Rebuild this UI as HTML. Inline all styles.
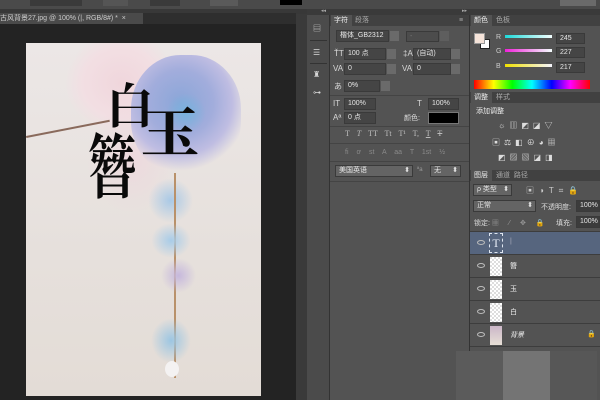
<!DOCTYPE html>
<html><head><meta charset="utf-8"><style>
*{margin:0;padding:0;box-sizing:border-box}
body{width:600px;height:400px;overflow:hidden;background:#232323;position:relative;font-family:"Liberation Sans","Noto Sans CJK SC",sans-serif;font-size:7px;color:#ddd}
.a{position:absolute}
.f{position:absolute;background:#454545;border:1px solid #3a3a3a;color:#e6e6e6;font-size:7px;line-height:10px;padding-left:3px}
.btn{position:absolute;background:#6a6a6a;width:9px;height:10px}
.ic{position:absolute;color:#d8d8d8;font-size:8px}
.row{position:absolute;left:470px;width:130px;height:23px;border-bottom:1px solid #3d3d3d;background:#535353}
.eye{position:absolute;left:7px;top:8px;width:8px;height:5px;border:1px solid #bbb;border-radius:50%}
.th{position:absolute;left:20px;top:2px;width:12px;height:19px;background:repeating-conic-gradient(#fff 0 25%,#ddd 0 50%) 0 0/4px 4px}
.nm{position:absolute;left:40px;top:6px;color:#eee;font-size:7px}
.cj{position:absolute;font-family:'Noto Serif CJK SC',serif;font-weight:700;color:#0a0a0a;line-height:1}
</style></head><body>
<div class="a" style="left:0;top:0;width:600px;height:9px;background:#4a4a4a"></div>
<div class="a" style="left:30px;top:0;width:52px;height:6px;background:#3a3a3a"></div>
<div class="a" style="left:103px;top:0;width:25px;height:6px;background:#555"></div>
<div class="a" style="left:150px;top:0;width:30px;height:6px;background:#3a3a3a"></div>
<div class="a" style="left:210px;top:0;width:28px;height:6px;background:#5a5a5a"></div>
<div class="a" style="left:280px;top:0;width:22px;height:5px;background:#000"></div>
<div class="a" style="left:560px;top:0;width:36px;height:6px;background:#6a6a6a"></div>
<div class="a" style="left:0;top:9px;width:600px;height:5px;background:#383838"></div>
<div class="a" style="left:0;top:13px;width:143px;height:11px;background:#4a4a4a;color:#ccc;font-size:7px;line-height:11px;white-space:nowrap">古风背景27.jpg @ 100% (|, RGB/8#) * &nbsp;×</div>
<div class="a" style="left:143px;top:13px;width:153px;height:11px;background:#2e2e2e"></div>
<div class="a" style="left:26px;top:43px;width:235px;height:353px;background:linear-gradient(180deg,#ece7e6,#e6e0dc 60%,#e3dcd6);overflow:hidden">
 <div class="a" style="left:40px;top:-10px;width:110px;height:100px;border-radius:50%;background:radial-gradient(#f0d6dc,#f2dfe3 50%,rgba(236,231,230,0) 72%)"></div>
 <div class="a" style="left:60px;top:60px;width:90px;height:110px;border-radius:50%;background:radial-gradient(rgba(238,214,220,.8),rgba(236,231,230,0) 70%)"></div>
 <div class="a" style="left:0;top:93px;width:85px;height:2px;background:#8a6a5c;transform:rotate(-11deg);transform-origin:0 0"></div>
 <div class="a" style="left:105px;top:12px;width:110px;height:120px;border-radius:45%;background:radial-gradient(circle at 45% 40%,#8aa6d8,#a2addc 35%,#bfbde2 55%,rgba(220,220,240,0) 72%)"></div>
 <div class="a" style="left:140px;top:50px;width:40px;height:40px;border-radius:50%;background:radial-gradient(#78b3de,rgba(200,220,240,0) 70%)"></div>
 <div class="a" style="left:122px;top:135px;width:45px;height:45px;border-radius:50%;background:radial-gradient(#a9c9e6,rgba(220,230,240,0) 70%)"></div>
 <div class="a" style="left:148px;top:130px;width:2px;height:205px;background:#b9916a"></div>
 <div class="a" style="left:125px;top:180px;width:40px;height:35px;border-radius:50%;background:radial-gradient(#a8cce8,rgba(220,230,240,0) 70%)"></div>
 <div class="a" style="left:135px;top:215px;width:35px;height:35px;border-radius:50%;background:radial-gradient(#c6b8dc,rgba(230,230,240,0) 70%)"></div>
 <div class="a" style="left:125px;top:275px;width:40px;height:45px;border-radius:50%;background:radial-gradient(#9cc6e2,rgba(220,230,240,0) 70%)"></div>
 <div class="a" style="left:139px;top:318px;width:14px;height:16px;border-radius:50%;background:#f4f2f2"></div>
 <div class="cj" style="left:80px;top:36px;font-size:48px">白</div>
 <div class="cj" style="left:117px;top:60px;font-size:54px;transform:scaleX(1.1)">玉</div>
 <div class="cj" style="left:62px;top:85px;font-size:48px;transform:scaleY(1.45);transform-origin:top">簪</div>
</div>
<div class="a" style="left:296px;top:14px;width:11px;height:386px;background:#3a3a3a"></div>
<div class="a" style="left:307px;top:14px;width:23px;height:386px;background:#4b4b4b;border-right:1px solid #333"></div>
<div class="a" style="left:307px;top:9px;width:293px;height:6px;background:#3a3a3a;color:#aaa;font-size:5px"><span class="a" style="left:14px;top:-1px">◂◂</span><span class="a" style="left:155px;top:-1px">▸▸</span></div>
<div class="ic" style="left:313px;top:23px">▤</div><div class="ic" style="left:313px;top:48px">☰</div><div class="ic" style="left:313px;top:70px">♜</div><div class="ic" style="left:313px;top:88px">⊶</div>
<div class="a" style="left:310px;top:40px;width:17px;height:1px;background:#333"></div>
<div class="a" style="left:310px;top:63px;width:17px;height:1px;background:#333"></div>
<div class="a" style="left:330px;top:15px;width:139px;height:385px;background:#535353"></div>
<div class="a" style="left:330px;top:15px;width:139px;height:11px;background:#414141"></div>
<div class="a" style="left:331px;top:15px;width:21px;height:11px;background:#535353;color:#eee;line-height:11px;padding-left:3px">字符</div>
<div class="a" style="left:355px;top:15px;color:#aaa;line-height:11px">段落</div>
<div class="a" style="left:459px;top:15px;color:#aaa;line-height:11px">≡</div>
<div class="f" style="left:336px;top:30px;width:53px;height:12px">楷体_GB2312</div><div class="btn" style="left:390px;top:31px"></div>
<div class="f" style="left:406px;top:31px;width:33px;height:11px;background:#4c4c4c;color:#777">-</div><div class="btn" style="left:440px;top:31px;background:#5e5e5e"></div>
<div class="ic" style="left:334px;top:49px">ŤT</div><div class="f" style="left:344px;top:48px;width:42px;height:12px">100 点</div><div class="btn" style="left:387px;top:49px"></div>
<div class="ic" style="left:403px;top:49px">‡A</div><div class="f" style="left:413px;top:48px;width:38px;height:12px">(自动)</div><div class="btn" style="left:451px;top:49px"></div>
<div class="ic" style="left:333px;top:64px">VA</div><div class="f" style="left:344px;top:63px;width:42px;height:12px">0</div><div class="btn" style="left:387px;top:64px"></div>
<div class="ic" style="left:402px;top:64px">VA</div><div class="f" style="left:413px;top:63px;width:38px;height:12px">0</div><div class="btn" style="left:451px;top:64px"></div>
<div class="ic" style="left:334px;top:81px">あ</div><div class="f" style="left:344px;top:80px;width:36px;height:12px">0%</div><div class="btn" style="left:381px;top:81px"></div>
<div class="a" style="left:330px;top:95px;width:139px;height:1px;background:#444"></div>
<div class="ic" style="left:333px;top:99px">IT</div><div class="f" style="left:344px;top:98px;width:32px;height:12px">100%</div>
<div class="ic" style="left:417px;top:99px">T</div><div class="f" style="left:428px;top:98px;width:31px;height:12px">100%</div>
<div class="ic" style="left:333px;top:113px">Aª</div><div class="f" style="left:344px;top:112px;width:32px;height:12px">0 点</div>
<div class="a" style="left:404px;top:113px;color:#ddd">颜色:</div><div class="a" style="left:428px;top:112px;width:31px;height:12px;background:#000;border:1px solid #777"></div>
<div class="a" style="left:330px;top:126px;width:139px;height:1px;background:#444"></div>
<div class="a" style="left:345px;top:129px;color:#bbb;font-family:'Liberation Serif',serif;font-size:8px;word-spacing:5px">T <i>T</i> TT Tt T¹ T, <u>T</u> <s>T</s></div>
<div class="a" style="left:330px;top:143px;width:139px;height:1px;background:#444"></div>
<div class="a" style="left:345px;top:149px;color:#8a8a8a;font-size:7px;word-spacing:6px">fi ơ st A aa T 1st ½</div>
<div class="a" style="left:330px;top:161px;width:139px;height:1px;background:#444"></div>
<div class="f" style="left:335px;top:165px;width:78px;height:12px;background:#646464">美国英语<span style="float:right;margin-right:2px">⬍</span></div>
<div class="a" style="left:417px;top:167px;color:#999;font-size:6px">ªa</div>
<div class="f" style="left:430px;top:165px;width:31px;height:12px;background:#646464">无<span style="float:right;margin-right:2px">⬍</span></div>
<div class="a" style="left:330px;top:181px;width:139px;height:1px;background:#444"></div>
<div class="a" style="left:469px;top:15px;width:1px;height:385px;background:#333"></div>
<div class="a" style="left:470px;top:15px;width:130px;height:385px;background:#535353"></div>
<div class="a" style="left:470px;top:15px;width:130px;height:11px;background:#414141"></div>
<div class="a" style="left:471px;top:15px;width:21px;height:11px;background:#535353;color:#eee;line-height:11px;padding-left:3px">颜色</div>
<div class="a" style="left:496px;top:15px;color:#aaa;line-height:11px">色板</div>
<div class="a" style="left:480px;top:39px;width:10px;height:10px;background:#fff;border:1px solid #222"></div>
<div class="a" style="left:474px;top:33px;width:11px;height:11px;background:#f5e3d9;border:1px solid #999"></div>
<div class="a" style="left:496px;top:34px;color:#ccc">R</div><div class="a" style="left:505px;top:35px;width:47px;height:3px;background:linear-gradient(90deg,#1cd9d9,#f5ffff)"></div><div class="f" style="left:556px;top:33px;width:29px;height:11px">245</div>
<div class="a" style="left:496px;top:48px;color:#ccc">G</div><div class="a" style="left:505px;top:49px;width:47px;height:3px;background:linear-gradient(90deg,#f020d9,#f5ffff)"></div><div class="f" style="left:556px;top:47px;width:29px;height:11px">227</div>
<div class="a" style="left:496px;top:63px;color:#ccc">B</div><div class="a" style="left:505px;top:64px;width:47px;height:3px;background:linear-gradient(90deg,#f0e000,#f5f5ff)"></div><div class="f" style="left:556px;top:62px;width:29px;height:11px">217</div>
<div class="a" style="left:474px;top:80px;width:116px;height:9px;background:linear-gradient(90deg,#f00,#ff0 17%,#0f0 33%,#0ff 50%,#00f 67%,#f0f 83%,#f00)"></div>
<div class="a" style="left:470px;top:92px;width:130px;height:11px;background:#414141"></div>
<div class="a" style="left:471px;top:92px;width:21px;height:11px;background:#535353;color:#eee;line-height:11px;padding-left:3px">调整</div>
<div class="a" style="left:496px;top:92px;color:#aaa;line-height:11px">样式</div>
<div class="a" style="left:476px;top:106px;color:#eee;font-size:7px">添加调整</div>
<div class="a" style="left:498px;top:120px;color:#ddd;font-size:8px;letter-spacing:4px">☼▥◩◪▽</div>
<div class="a" style="left:492px;top:137px;color:#ddd;font-size:8px;letter-spacing:4px">▣⚖◧⊕◕▦</div>
<div class="a" style="left:498px;top:152px;color:#ddd;font-size:8px;letter-spacing:4px">◩▨▧◪◨</div>
<div class="a" style="left:470px;top:170px;width:130px;height:11px;background:#414141"></div>
<div class="a" style="left:471px;top:170px;width:21px;height:11px;background:#535353;color:#eee;line-height:11px;padding-left:3px">图层</div>
<div class="a" style="left:496px;top:170px;color:#aaa;line-height:11px">通道 &nbsp;路径</div>
<div class="f" style="left:473px;top:184px;width:39px;height:12px;background:#646464">ρ 类型 <span style="float:right;margin-right:2px">⬍</span></div>
<div class="a" style="left:526px;top:185px;color:#ccc;font-size:8px;letter-spacing:5px">▣◑T⌗🔒</div>
<div class="f" style="left:473px;top:200px;width:63px;height:12px;background:#646464">正常<span style="float:right;margin-right:2px">⬍</span></div>
<div class="a" style="left:541px;top:202px;color:#ddd">不透明度:</div><div class="f" style="left:576px;top:200px;width:24px;height:12px;background:#3c3c3c">100%</div>
<div class="a" style="left:474px;top:218px;color:#ddd">锁定: <span style="color:#999;letter-spacing:4px">▦ ⁄ ✥ 🔒</span></div>
<div class="a" style="left:556px;top:218px;color:#ddd">填充:</div><div class="f" style="left:576px;top:216px;width:24px;height:12px;background:#3c3c3c">100%</div>
<div class="a" style="left:470px;top:231px;width:130px;height:1px;background:#3d3d3d"></div>
<div class="row" style="top:232px;background:#56657e"><div class="eye"></div><div class="a" style="left:19px;top:1px;width:14px;height:20px;border:1px dashed #dfe6f0;color:#e6ecf5;font-family:'Liberation Serif',serif;font-size:12px;text-align:center;line-height:18px">T</div><div class="nm" style="color:#aab">|</div></div>
<div class="row" style="top:255px"><div class="eye"></div><div class="th"></div><div class="nm">簪</div></div>
<div class="row" style="top:278px"><div class="eye"></div><div class="th"></div><div class="nm">玉</div></div>
<div class="row" style="top:301px"><div class="eye"></div><div class="th"></div><div class="nm">白</div></div>
<div class="row" style="top:324px"><div class="eye"></div><div class="th" style="background:linear-gradient(#cbb7c8,#e7dfd6)"></div><div class="nm"><i>背景</i></div><div class="a" style="left:117px;top:6px;color:#bbb">🔒</div></div>
<div class="a" style="left:456px;top:351px;width:47px;height:49px;background:#5b5b5b"></div>
<div class="a" style="left:503px;top:351px;width:47px;height:49px;background:#747474"></div>
<div class="a" style="left:550px;top:351px;width:47px;height:49px;background:#575757"></div>
</body></html>
